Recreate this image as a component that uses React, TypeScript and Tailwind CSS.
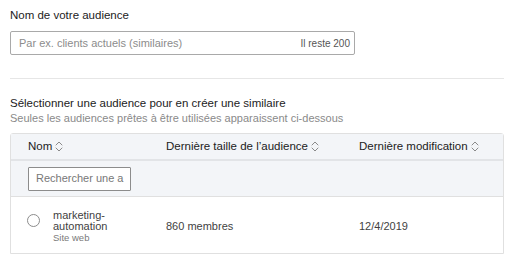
import React from 'react'

function SortIcon() {
  return (
    <svg width="8" height="11" viewBox="0 0 8 11" fill="none" stroke="#8a8a8a" strokeWidth="1" strokeLinecap="round" strokeLinejoin="round" className="ml-[3px] inline-block">
      <path d="M1 4 L4 1 L7 4" />
      <path d="M1 7 L4 10 L7 7" />
    </svg>
  )
}

export default function App() {
  return (
    <div className="w-[512px] h-[258px] overflow-hidden bg-white pl-[10px] pr-[8px] pt-[8px] text-[#1d1d1d]" style={{ fontFamily: '"Liberation Sans", Arial, sans-serif' }}>
      <div className="text-[11.5px] leading-[14px] font-medium text-[#222]">Nom de votre audience</div>
      <div className="mt-[9px] w-[345px] h-[24px] border border-[#a9a9a9] rounded-[2px] flex items-center justify-between pl-[8px] pr-[4px]">
        <span className="text-[11px] text-[#8c8c8c]">Par ex. clients actuels (similaires)</span>
        <span className="text-[10px] text-[#555]">Il reste 200</span>
      </div>
      <div className="mt-[23px] border-t border-[#e6e6e6]" />
      <div className="mt-[17px] text-[11.5px] leading-[14px] font-medium text-[#222]">Sélectionner une audience pour en créer une similaire</div>
      <div className="mt-[1px] text-[11px] leading-[14px] text-[#8a8a8a]">Seules les audiences prêtes à être utilisées apparaissent ci-dessous</div>
      <div className="mt-[8px] border border-[#e0e0e0] rounded-t-[3px]">
        <div className="h-[27px] bg-[#f3f5f8] border-b-2 border-[#e2e4e7] flex items-center text-[11.5px] font-medium text-[#222]">
          <div className="w-[155px] pl-[17px] flex items-center">Nom<SortIcon /></div>
          <div className="w-[193px] flex items-center">Dernière taille de l’audience<SortIcon /></div>
          <div className="flex items-center">Dernière modification<SortIcon /></div>
        </div>
        <div className="h-[36px] bg-[#f3f5f8] border-b border-[#e0e0e0] flex items-center pl-[17px]">
          <div className="w-[103px] h-[24px] bg-white border border-[#8c8c8c] rounded-[1px] flex items-center pl-[7px] overflow-hidden whitespace-nowrap text-[11px] text-[#777]">Rechercher une a</div>
        </div>
        <div className="h-[56px] bg-white flex items-center text-[11px] text-[#3f3f3f]">
          <div className="w-[42px] pl-[16px] flex items-center self-start pt-[17px]">
            <div className="w-[13px] h-[13px] rounded-full border border-[#8c8c8c]" />
          </div>
          <div className="w-[113px] flex flex-col leading-[11px] self-start pt-[13px]">
            <span>marketing-</span>
            <span>automation</span>
            <span className="text-[9.5px] text-[#7a7a7a]">Site web</span>
          </div>
          <div className="w-[193px] pt-[2px]">860 membres</div>
          <div className="pt-[2px]">12/4/2019</div>
        </div>
      </div>
    </div>
  )
}
